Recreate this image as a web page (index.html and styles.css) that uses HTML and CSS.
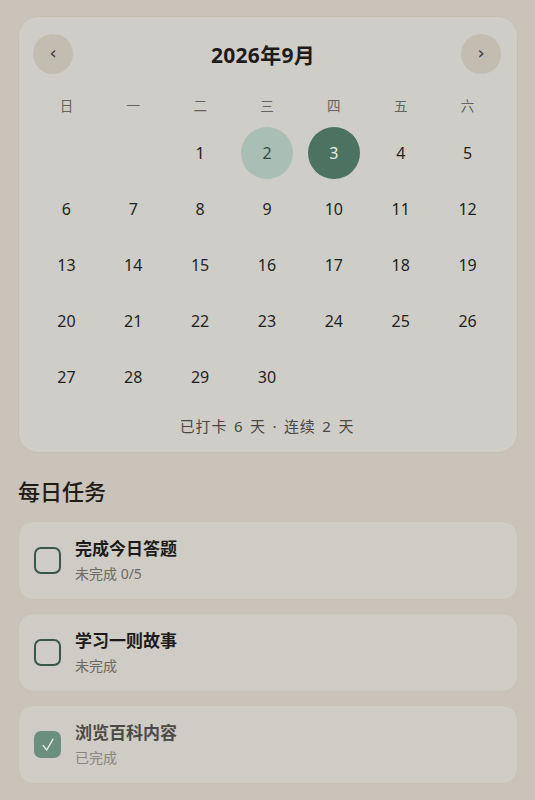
FILE: index.html
```html
<!DOCTYPE html>
<html lang="zh">
<head>
<meta charset="utf-8">
<link rel="stylesheet" href="styles.css">
</head>
<body>
<div class="page">
  <section class="calendar">
    <div class="cal-head">
      <button class="nav">‹</button>
      <h1 class="title">2026年9月</h1>
      <button class="nav">›</button>
    </div>
    <div class="grid weekdays">
      <span>日</span><span>一</span><span>二</span><span>三</span><span>四</span><span>五</span><span>六</span>
    </div>
    <div class="grid days">
      <span></span><span></span>
      <span>1</span><span class="done">2</span><span class="today">3</span><span>4</span><span>5</span>
      <span>6</span><span>7</span><span>8</span><span>9</span><span>10</span><span>11</span><span>12</span>
      <span>13</span><span>14</span><span>15</span><span>16</span><span>17</span><span>18</span><span>19</span>
      <span>20</span><span>21</span><span>22</span><span>23</span><span>24</span><span>25</span><span>26</span>
      <span>27</span><span>28</span><span>29</span><span>30</span>
    </div>
    <p class="summary">已打卡 6 天 · 连续 2 天</p>
  </section>

  <h2 class="section-title">每日任务</h2>

  <div class="tasks">
    <div class="task">
      <span class="box"></span>
      <div class="task-text">
        <div class="task-name">完成今日答题</div>
        <div class="task-sub">未完成 0/5</div>
      </div>
    </div>
    <div class="task">
      <span class="box"></span>
      <div class="task-text">
        <div class="task-name">学习一则故事</div>
        <div class="task-sub">未完成</div>
      </div>
    </div>
    <div class="task completed">
      <span class="box checked"><svg viewBox="0 0 24 24" width="20" height="20"><polyline points="6,12.5 10.5,18 18,5" fill="none" stroke="#e8eee9" stroke-width="1.6" stroke-linecap="round" stroke-linejoin="round"/></svg></span>
      <div class="task-text">
        <div class="task-name">浏览百科内容</div>
        <div class="task-sub">已完成</div>
      </div>
    </div>
  </div>
</div>
</body>
</html>
```
FILE: styles.css
```css
* { box-sizing: border-box; }
html, body {
  margin: 0;
  padding: 0;
  background: #c9c3b9;
  font-family: "Noto Sans", "Noto Sans CJK SC", sans-serif;
  color: #222;
}
.page {
  padding: 16px 17px 20px 18px;
}
.calendar {
  background: #cfcdc8;
  border: 1px solid #c6bfb1;
  border-radius: 20px;
  padding: 15px 16px 14px 14px;
}
.cal-head {
  display: flex;
  align-items: center;
  justify-content: space-between;
  height: 44px;
}
.nav {
  width: 40px;
  height: 40px;
  border-radius: 50%;
  border: none;
  background: #c3bdb1;
  color: #3a3a3a;
  font-size: 18px;
  font-family: "DejaVu Sans", sans-serif;
  padding: 0 0 3px;
  display: flex;
  align-items: center;
  justify-content: center;
}
.title {
  margin: 0 8px 0 0;
  font-size: 21px;
  font-weight: 700;
  color: #1e1c1a;
  letter-spacing: 0.3px;
}
.grid {
  display: grid;
  grid-template-columns: repeat(7, 1fr);
  text-align: center;
}
.weekdays {
  margin-top: 20px;
  font-size: 13.5px;
  color: #66625d;
  line-height: 20px;
}
.days {
  margin-top: 11px;
  grid-auto-rows: 56px;
  font-size: 16px;
  color: #1f1f1f;
}
.days span {
  display: flex;
  align-items: center;
  justify-content: center;
  margin: 0 auto;
  width: 52px;
  height: 52px;
  border-radius: 50%;
}
.days .done {
  background: #a9bfb5;
  color: #2f4c40;
}
.days .today {
  background: #4c7361;
  color: #e8ece9;
}
.summary {
  margin: 7px 0 0;
  text-align: center;
  font-size: 15px;
  color: #4a4744;
  line-height: 24px;
  letter-spacing: 0.8px;
  word-spacing: 2px;
}
.section-title {
  margin: 22px 0 14px;
  font-size: 22px;
  font-weight: 500;
  color: #1f1b17;
  line-height: 32px;
}
.tasks {
  display: flex;
  flex-direction: column;
  gap: 13px;
}
.task {
  display: flex;
  align-items: center;
  gap: 14px;
  height: 79px;
  padding: 0 15px;
  background: #cfccc6;
  border: 1px solid #c8c1b4;
  border-radius: 15px;
}
.box {
  width: 27px;
  height: 27px;
  border: 2px solid #395648;
  border-radius: 7px;
  flex: none;
}
.box.checked {
  background: #6b8f7d;
  border-color: #6b8f7d;
  display: flex;
  align-items: center;
  justify-content: center;
}
.task-name {
  font-size: 17px;
  font-weight: 700;
  color: #1d1b19;
  line-height: 22px;
}
.task-sub {
  margin-top: 4px;
  font-size: 14px;
  color: #6c6863;
  line-height: 19px;
}
.completed .task-name { color: #4d4a46; }
.completed .task-sub { color: #8a857e; }
```
